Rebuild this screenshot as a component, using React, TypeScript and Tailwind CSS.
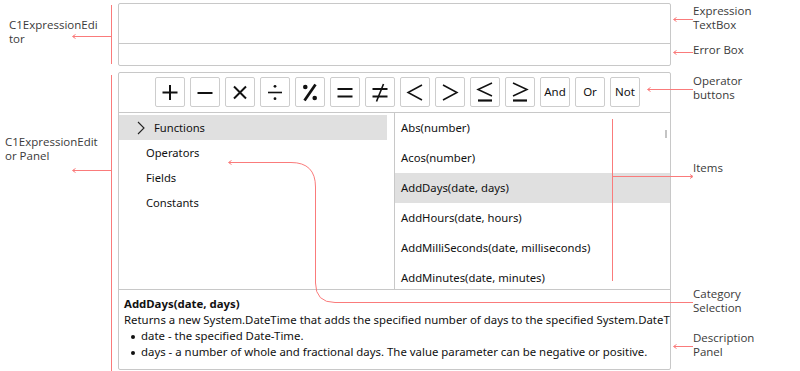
import type { ReactNode } from 'react';

const ui = "font-['Noto_Sans','Open_Sans',sans-serif]";
const note = "font-['Open_Sans','Noto_Sans',sans-serif]";

function Glyph({ children }: { children: ReactNode }) {
  return (
    <svg width="28" height="28" viewBox="0 0 28 28" fill="none" stroke="#111" strokeLinecap="butt">
      {children}
    </svg>
  );
}

const glyphs: ReactNode[] = [
  <Glyph key="plus">
    <path d="M6.5 14.5H21.5M14 7V22" strokeWidth="2" />
  </Glyph>,
  <Glyph key="minus">
    <path d="M6.5 15H21.5" strokeWidth="2" />
  </Glyph>,
  <Glyph key="times">
    <path d="M8 8.5L20 20.5M20 8.5L8 20.5" strokeWidth="2" />
  </Glyph>,
  <Glyph key="divide">
    <path d="M7 14.5H21" strokeWidth="1.6" />
    <circle cx="14" cy="8.3" r="1.4" fill="#111" stroke="none" />
    <circle cx="14" cy="20.7" r="1.4" fill="#111" stroke="none" />
  </Glyph>,
  <Glyph key="percent">
    <path d="M19.5 6.5L8.5 22.5" strokeWidth="2.8" />
    <circle cx="9.3" cy="9" r="2.3" fill="#111" stroke="none" />
    <circle cx="18.7" cy="20" r="2.3" fill="#111" stroke="none" />
  </Glyph>,
  <Glyph key="eq">
    <path d="M6.5 11H21.5M6.5 18.5H21.5" strokeWidth="2" />
  </Glyph>,
  <Glyph key="neq">
    <path d="M6.5 11H21.5M6.5 18.5H21.5" strokeWidth="2" />
    <path d="M17.5 6L10.5 23.5" strokeWidth="1.6" />
  </Glyph>,
  <Glyph key="lt">
    <path d="M21 7L7 14.5L21 22" strokeWidth="1.5" />
  </Glyph>,
  <Glyph key="gt">
    <path d="M7 7L21 14.5L7 22" strokeWidth="1.5" />
  </Glyph>,
  <Glyph key="le">
    <path d="M21 5L7 11.5L21 18" strokeWidth="1.5" />
    <path d="M7 22.5H21" strokeWidth="2.2" />
  </Glyph>,
  <Glyph key="ge">
    <path d="M7 5L21 11.5L7 18" strokeWidth="1.5" />
    <path d="M7 22.5H21" strokeWidth="2.2" />
  </Glyph>,
];

const words = ['And', 'Or', 'Not'];
const categories = ['Operators', 'Fields', 'Constants'];
const items = [
  'Abs(number)',
  'Acos(number)',
  'AddDays(date, days)',
  'AddHours(date, hours)',
  'AddMilliSeconds(date, milliseconds)',
  'AddMinutes(date, minutes)',
];
const params = [
  'date - the specified Date-Time.',
  'days - a number of whole and fractional days. The value parameter can be negative or positive.',
];

function OpButton({ children }: { children: ReactNode }) {
  return (
    <div className="w-[30px] h-[30px] border border-[#cdcdcd] rounded-[2px] bg-white flex items-center justify-center text-[11.5px] text-[#111]">
      {children}
    </div>
  );
}

function Note({ top, left, children }: { top: number; left: number; children: ReactNode }) {
  return (
    <div
      className={`absolute text-[11.5px] leading-[14px] text-[#3a3a3a] ${note}`}
      style={{ top, left }}
    >
      {children}
    </div>
  );
}

function Callouts() {
  const red = '#fa7b7b';
  const head = (x: number, y: number, dir: 1 | -1) =>
    `M${x + dir * 3} ${y - 2}L${x} ${y}L${x + dir * 3} ${y + 2}`;
  return (
    <svg className="absolute inset-0 pointer-events-none" width="800" height="371" fill="none" stroke={red} strokeWidth="1">
      <path d="M111.5 5V64M111 36.5H73" />
      <path d={head(72.5, 36.5, 1)} />
      <path d="M111.5 75V371M111 170.5H73" />
      <path d={head(72.5, 170.5, 1)} />
      <path d="M693 19.5H674" />
      <path d={head(673.5, 19.5, 1)} />
      <path d="M693 52.5H674" />
      <path d={head(673.5, 52.5, 1)} />
      <path d="M693 89.5H648" />
      <path d={head(647.5, 89.5, 1)} />
      <path d="M612.5 119V281M612 176.5H692" />
      <path d={head(693, 176.5, -1)} />
      <path d="M229 162.5H291Q315.5 162.5 315.5 187V283Q315.5 302.5 335 302.5H693" />
      <path d={head(228.5, 162.5, 1)} />
      <path d="M693 346.5H674" />
      <path d={head(673.5, 346.5, 1)} />
    </svg>
  );
}

export default function App() {
  return (
    <div className={`relative w-[800px] h-[371px] bg-white overflow-hidden ${ui}`}>
      <div className="ml-[118px] w-[553px] pt-[3px] flex flex-col">
        {/* expression editor */}
        <div className="h-[63px] border border-[#c8c8c8] rounded-[2px] flex flex-col">
          <div className="h-[40px] border-b border-[#c8c8c8]" />
          <div className="flex-1" />
        </div>

        {/* expression editor panel */}
        <div className="mt-[6px] h-[298px] border border-[#c8c8c8] rounded-[2px] flex flex-col">
          <div className="h-[40px] border-b border-[#c8c8c8] flex items-start pt-[4px] pl-[36px] gap-[5px]">
            {glyphs.map((g, i) => (
              <OpButton key={i}>{g}</OpButton>
            ))}
            {words.map((w) => (
              <OpButton key={w}>{w}</OpButton>
            ))}
          </div>

          <div className="h-[177px] border-b border-[#c8c8c8] flex">
            <div className="w-[276px] border-r border-[#c8c8c8] pt-[2px] pr-[7px] text-[11.2px] text-[#111]">
              <div className="h-[25px] bg-[#e0e0e0] flex items-center pl-[18px] pt-[1px]">
                <svg width="8" height="14" viewBox="0 0 8 14" fill="none" stroke="#222" strokeWidth="1.1">
                  <path d="M1 1L7 7L1 13" />
                </svg>
                <span className="ml-[9px]">Functions</span>
              </div>
              {categories.map((c) => (
                <div key={c} className="h-[25px] flex items-center pl-[27px] pt-[1px]">
                  {c}
                </div>
              ))}
            </div>
            <div className="relative flex-1 text-[11.3px] text-[#111]">
              {items.map((it, i) => (
                <div
                  key={it}
                  className={`h-[30px] flex items-center pl-[6px] pt-[1px] ${i === 2 ? 'bg-[#e0e0e0]' : ''}`}
                >
                  {it}
                </div>
              ))}
              <div className="absolute right-[3px] top-[17px] w-[2px] h-[8px] bg-[#c4c4c4]" />
            </div>
          </div>

          <div className="flex-1 overflow-hidden pt-[6px] pl-[5px] text-[11.4px] leading-[16px] text-[#111] whitespace-nowrap">
            <div className="font-bold">AddDays(date, days)</div>
            <div>Returns a new System.DateTime that adds the specified number of days to the specified System.DateTime.</div>
            {params.map((p) => (
              <div key={p} className="flex items-center">
                <span className="ml-[7px] mr-[6px] mt-[1px] w-[4px] h-[4px] rounded-full bg-[#111]" />
                <span>{p}</span>
              </div>
            ))}
          </div>
        </div>
      </div>

      <Callouts />

      <Note top={18} left={9}>
        C1ExpressionEdi
        <br />
        tor
      </Note>
      <Note top={135} left={5}>
        C1ExpressionEdit
        <br />
        or Panel
      </Note>
      <Note top={4} left={693}>
        Expression
        <br />
        TextBox
      </Note>
      <Note top={43} left={693}>
        Error Box
      </Note>
      <Note top={74} left={693}>
        Operator
        <br />
        buttons
      </Note>
      <Note top={161} left={693}>
        Items
      </Note>
      <Note top={287} left={693}>
        Category
        <br />
        Selection
      </Note>
      <Note top={331} left={693}>
        Description
        <br />
        Panel
      </Note>
    </div>
  );
}
